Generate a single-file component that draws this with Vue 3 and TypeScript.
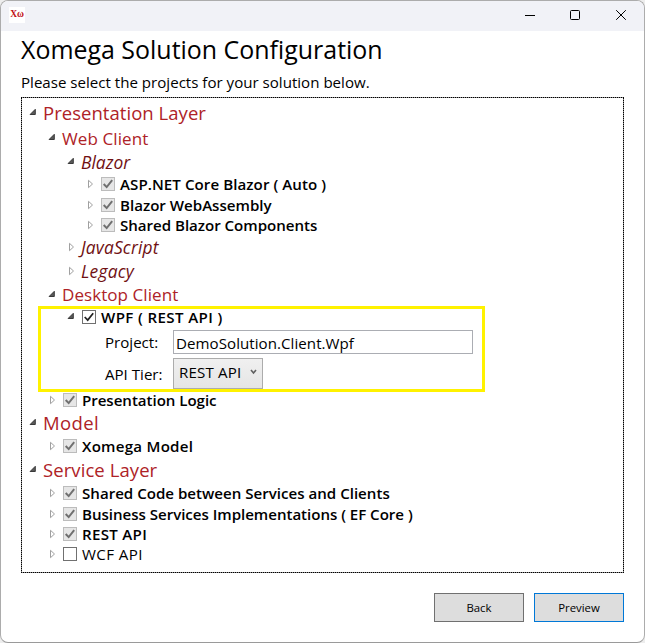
<script setup lang="ts">
import { ref } from 'vue'

type Kind = 'layer' | 'group' | 'subgroup' | 'project'
type Check = 'locked' | 'on' | 'off'

interface TreeNode {
  label: string
  kind: Kind
  depth: number
  open?: boolean
  check?: Check
  form?: boolean
  tracking?: number
}

const nodes: TreeNode[] = [
  { label: 'Presentation Layer', kind: 'layer', depth: 0, open: true, tracking: 0.04 },
  { label: 'Web Client', kind: 'group', depth: 1, open: true, tracking: 0.08 },
  { label: 'Blazor', kind: 'subgroup', depth: 2, open: true },
  { label: 'ASP.NET Core Blazor ( Auto )', kind: 'project', depth: 3, check: 'locked', tracking: 0.07 },
  { label: 'Blazor WebAssembly', kind: 'project', depth: 3, check: 'locked' },
  { label: 'Shared Blazor Components', kind: 'project', depth: 3, check: 'locked', tracking: -0.03 },
  { label: 'JavaScript', kind: 'subgroup', depth: 2, tracking: 0.15 },
  { label: 'Legacy', kind: 'subgroup', depth: 2, tracking: 0.2 },
  { label: 'Desktop Client', kind: 'group', depth: 1, open: true, tracking: 0.05 },
  { label: 'WPF ( REST API )', kind: 'project', depth: 2, open: true, check: 'on', form: true, tracking: 0.38 },
  { label: 'Presentation Logic', kind: 'project', depth: 1, check: 'locked', tracking: -0.04 },
  { label: 'Model', kind: 'layer', depth: 0, open: true, tracking: 0.4 },
  { label: 'Xomega Model', kind: 'project', depth: 1, check: 'locked', tracking: 0.25 },
  { label: 'Service Layer', kind: 'layer', depth: 0, open: true, tracking: 0.08 },
  { label: 'Shared Code between Services and Clients', kind: 'project', depth: 1, check: 'locked' },
  { label: 'Business Services Implementations ( EF Core )', kind: 'project', depth: 1, check: 'locked', tracking: -0.03 },
  { label: 'REST API', kind: 'project', depth: 1, check: 'locked', tracking: 0.3 },
  { label: 'WCF API', kind: 'project', depth: 1, check: 'off', tracking: 0.4 },
]

const projectName = ref('DemoSolution.Client.Wpf')
</script>

<template>
  <div class="window">
    <header class="titlebar">
      <span class="logo">Xω</span>
      <div class="controls">
        <svg width="12" height="12" viewBox="0 0 12 12"><path d="M1 6.5H11" /></svg>
        <svg width="12" height="12" viewBox="0 0 12 12"><rect x="1.5" y="1.5" width="9" height="9" rx="1" /></svg>
        <svg width="12" height="12" viewBox="0 0 12 12"><path d="M1.2 1.2L10.8 10.8M10.8 1.2L1.2 10.8" /></svg>
      </div>
    </header>

    <main class="content">
      <h1>Xomega Solution Configuration</h1>
      <p class="intro">Please select the projects for your solution below.</p>

      <div class="tree">
        <template v-for="node in nodes" :key="node.label">
          <div class="row" :class="[node.kind, 'd' + node.depth, node.check]">
            <svg class="arrow" :class="{ open: node.open }" width="9" height="10" viewBox="0 0 9 10">
              <path v-if="node.open" d="M6.3 1.3V6.5H1.1Z" />
              <path v-else d="M2.5 1.3V8.7L6.5 5Z" />
            </svg>
            <span v-if="node.check" class="box">
              <svg v-if="node.check !== 'off'" width="12" height="12" viewBox="0 0 12 12">
                <path d="M1.7 6L4.7 9.1L10.2 2.2" />
              </svg>
            </span>
            <span class="label" :style="{ letterSpacing: (node.tracking ?? 0) + 'px' }">{{ node.label }}</span>
          </div>
          <div v-if="node.form" class="form">
            <span class="name">Project:</span>
            <input v-model="projectName" type="text" spellcheck="false" />
            <span class="name">API Tier:</span>
            <button type="button" class="combo">
              <span>REST API</span>
              <svg width="7" height="6" viewBox="0 0 7 6"><path d="M1 1L3.5 4L6 1" /></svg>
            </button>
          </div>
        </template>
        <div class="highlight"></div>
      </div>

      <footer>
        <button type="button" class="btn">Back</button>
        <button type="button" class="btn primary">Preview</button>
      </footer>
    </main>
  </div>
</template>

<style>
body {
  background: #ededed;
}
</style>

<style scoped>
.window {
  box-sizing: border-box;
  width: 645px;
  height: 643px;
  border: 1px solid #acacac;
  border-bottom-color: #9a9a9a;
  border-radius: 8px;
  background: #fff;
  overflow: hidden;
  font-family: "Open Sans", "Noto Sans", sans-serif;
  color: #000;
}
.titlebar {
  height: 30px;
  background: #f1f2f7;
  display: flex;
  justify-content: space-between;
}
.logo {
  width: 16px;
  height: 16px;
  margin: 6px 0 0 8px;
  background: #fff;
  color: #c00d12;
  font: bold 9.5px/15px "Liberation Serif", serif;
  letter-spacing: -0.2px;
  text-align: center;
}
.controls {
  display: flex;
  gap: 33px;
  padding: 8px 17px 0 0;
}
.controls svg {
  fill: none;
  stroke: #000;
  stroke-width: 1;
}
.controls svg:not(:last-child) {
  margin-left: -1px;
  margin-right: 1px;
}
.content {
  padding: 0 20px;
}
h1 {
  margin: 0;
  font-size: 24.95px;
  line-height: 36px;
  font-weight: 400;
  white-space: nowrap;
}
.intro {
  margin: 3px 0 0;
  font-size: 15.1px;
  line-height: 24px;
}
.tree {
  position: relative;
  box-sizing: border-box;
  height: 476px;
  margin-top: 3px;
  border: 1px dotted #000;
  background: linear-gradient(#fff, #fff) padding-box, linear-gradient(#8a8a8a, #8a8a8a) border-box;
  padding-top: 1.6px;
}
.row {
  display: flex;
  align-items: center;
  white-space: nowrap;
}
.d0 { padding-left: 7px; }
.d1 { padding-left: 26px; }
.d2 { padding-left: 45px; }
.d3 { padding-left: 64px; }
.arrow {
  flex: none;
  margin-right: 5px;
  fill: #fff;
  stroke: #a0a0a0;
  stroke-width: 1;
}
.arrow.open {
  fill: #595959;
  stroke: #3a3a3a;
}
.layer {
  height: 26.8px;
  font-size: 18.5px;
  color: #ae2227;
}
.group {
  height: 24px;
  font-size: 17.05px;
  color: #ae2227;
}
.subgroup {
  height: 24px;
  font-size: 17.4px;
  font-style: italic;
  color: #701012;
}
.project {
  height: 20.15px;
  font-size: 15.1px;
  font-weight: 600;
}
.project.off {
  font-weight: 400;
}
.box {
  box-sizing: border-box;
  flex: none;
  width: 14px;
  height: 14px;
  margin: 0 5px 0 1px;
  border: 1px solid #707070;
  background: #fff;
}
.box svg {
  display: block;
  fill: none;
  stroke: #212121;
  stroke-width: 1.7;
}
.locked .box {
  border-color: #bcbcbc;
  background: #e6e6e6;
}
.locked .box svg {
  stroke: #707070;
  stroke-width: 2;
}
.form {
  display: grid;
  grid-template-columns: 68px 300px;
  grid-template-rows: 24px 31px;
  row-gap: 4px;
  align-items: center;
  height: 62.5px;
  box-sizing: border-box;
  padding: 3px 0 0 83px;
  font-size: 15.1px;
}
.name {
  line-height: 20px;
  padding-top: 1px;
}
input {
  box-sizing: border-box;
  width: 300px;
  height: 24px;
  padding: 2px 2px 0;
  border: 1px solid #abadb3;
  outline: none;
  background: #fff;
  color: #000;
  font: inherit;
  letter-spacing: 0.05px;
}
.combo {
  box-sizing: border-box;
  width: 90px;
  height: 31px;
  display: flex;
  align-items: center;
  justify-content: space-between;
  padding: 0 5px 3px;
  border: 1px solid #acacac;
  background: linear-gradient(#f0f0f0, #e5e5e5);
  color: #000;
  font: inherit;
  letter-spacing: 0.15px;
}
.combo svg {
  fill: none;
  stroke: #606060;
  stroke-width: 1.6;
}
.highlight {
  position: absolute;
  left: 16px;
  top: 208px;
  width: 441px;
  height: 80px;
  border: 3px solid #fff200;
  pointer-events: none;
}
footer {
  display: flex;
  justify-content: flex-end;
  gap: 10px;
  margin-top: 20px;
}
.btn {
  box-sizing: border-box;
  width: 90px;
  height: 29px;
  padding: 0;
  border: 1px solid #707070;
  background: #ddd;
  color: #000;
  font: 11.4px "Open Sans", sans-serif;
}
.primary {
  border-color: #0078d7;
}
</style>
